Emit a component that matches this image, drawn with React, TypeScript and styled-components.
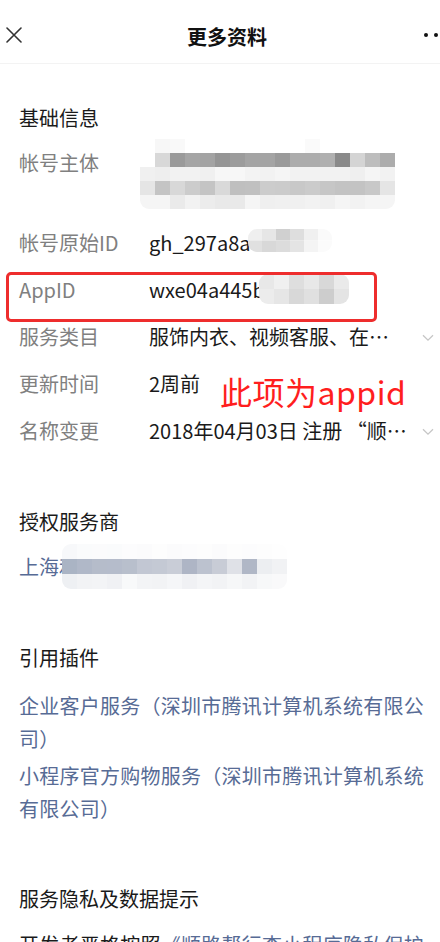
import React from 'react';
import styled, { createGlobalStyle } from 'styled-components';

const GlobalStyle = createGlobalStyle`
  html, body {
    margin: 0;
    padding: 0;
    background: #ffffff;
  }
  body {
    font-family: "Noto Sans CJK SC", "Noto Sans", sans-serif;
  }
`;

// mosaic colours of the blurred parts, row by row
const subjectCells = [
    ['#ffffff', '#f7f7f7', '#f9f9f9', '#ffffff', '#ffffff', '#ffffff', '#ffffff', '#ffffff', '#ffffff', '#ffffff', '#ffffff', '#fafafa', '#ffffff', '#ffffff', '#ffffff', '#ffffff', '#ffffff'],
    ['#ffffff', '#d8d8d8', '#9a9a9a', '#a5a5a5', '#a3a3a3', '#959595', '#9c9c9c', '#a4a4a4', '#a4a4a4', '#9a9a9a', '#acacac', '#acacac', '#b0b0b0', '#8a8a8a', '#d4d4d4', '#bdbdbd', '#acacac'],
    ['#f0f0f0', '#eeeeee', '#f2f2f2', '#f2f2f2', '#f0f0f0', '#f7f7f7', '#f7f7f7', '#f3f3f3', '#f2f2f2', '#f5f5f5', '#f2f2f2', '#f2f2f2', '#f2f2f2', '#f2f2f2', '#efefef', '#f5f5f5', '#f2f2f2'],
    ['#e5e5e5', '#c4c4c4', '#d8d8d8', '#cccccc', '#c4c4c4', '#d9d9d9', '#bfbfbf', '#c0c0c0', '#cccccc', '#cbcbcb', '#c8c8c8', '#cbcbcb', '#c6c6c6', '#c3c3c3', '#c3c3c3', '#c8c8c8', '#e5e5e5'],
    ['#f5f5f5', '#f5f5f5', '#eaeaea', '#f2f2f2', '#ececec', '#e9e9e9', '#e9e9e9', '#f5f5f5', '#efefef', '#f0f0f0', '#f0f0f0', '#f2f2f2', '#f0f0f0', '#f5f5f5', '#f2f2f2', '#f5f5f5', '#f5f5f5'],
];

const originCells = [
    ['#efefef', '#e6e6e6', '#d0d0d0', '#dedede', '#f0f0f0', '#fafafa'],
    ['#e0e0e0', '#d8d8d8', '#dcdcdc', '#e4e4e4', '#f4f4f4', '#fbfbfb'],
];

const appIdCells = [
    ['#e8e8e8', '#f0f0f0', '#dedede', '#e8e8e8', '#d8d8d8', '#eaeaea'],
    ['#ececec', '#e6e6e6', '#d8d8d8', '#e0e0e0', '#cdcdcd', '#e4e4e4'],
];

const providerCells = [
    ['#f7f8fa', '#fafbfc', '#fbfbfc', '#fafbfc', '#fcfcfd', '#fbfbfc', '#fdfdfd', '#fbfbfc', '#fcfcfd', '#fdfdfd', '#fbfbfc', '#fdfdfd', '#fcfcfd', '#fdfdfd', '#fefefe'],
    ['#aab4c4', '#b0b8c8', '#b5bcca', '#b5bccb', '#b8bfcc', '#c2c7d3', '#c4c9d4', '#c9cdd7', '#aeb5c5', '#bcc2cf', '#c8ccd6', '#dfe1e7', '#b0b7c6', '#eceef1', '#f1f2f4'],
    ['#eef0f3', '#f2f3f5', '#f3f4f6', '#f0f1f4', '#f8f9fa', '#f3f4f6', '#f2f3f5', '#f5f6f8', '#f0f1f4', '#f4f5f7', '#f2f3f5', '#f6f7f8', '#f2f3f5', '#f7f8f9', '#f9f9fa'],
];

interface MosaicProps {
    cells: string[][];
    cell?: number;
    rowHeight?: number;
    dx?: number;
    dy?: number;
    block?: boolean;
}

function Mosaic({ cells, cell = 15, rowHeight = 15, dx = 0, dy = 0, block = false }: MosaicProps) {
    const id = React.useId();
    const w = cells[0].length * cell;
    const h = cells.length * rowHeight;
    return (
        <MosaicSvg width={w} height={h} $dx={dx} $dy={dy} $block={block}>
            <defs>
                <clipPath id={id}>
                    <rect x="0" y="0" width={w} height={h} rx="9" />
                </clipPath>
            </defs>
            <g clipPath={`url(#${id})`}>
                {cells.map((row, r) =>
                    row.map((c, i) => (
                        <rect key={`${r}-${i}`} x={i * cell} y={r * rowHeight} width={cell} height={rowHeight} fill={c} />
                    ))
                )}
            </g>
        </MosaicSvg>
    );
}

const MosaicSvg = styled.svg<{ $dx: number; $dy: number; $block: boolean }>`
  display: ${(p) => (p.$block ? 'block' : 'inline-block')};
  vertical-align: top;
  margin-left: ${(p) => p.$dx}px;
  margin-top: ${(p) => p.$dy}px;
  margin-bottom: ${(p) => (p.$block ? 2 : p.$dy)}px;
`;

function CloseIcon() {
    return (
        <svg width="16" height="16" viewBox="0 0 16 16">
            <path d="M1 1 L15 15 M15 1 L1 15" stroke="#333" strokeWidth="1.6" strokeLinecap="round" fill="none" />
        </svg>
    );
}

function MoreIcon() {
    return (
        <svg width="16" height="6" viewBox="0 0 16 6">
            <circle cx="2" cy="3" r="2" fill="#111" />
            <circle cx="12" cy="3" r="2" fill="#111" />
            <circle cx="22" cy="3" r="2" fill="#111" />
        </svg>
    );
}

function ChevronIcon() {
    return (
        <svg width="12" height="8" viewBox="0 0 12 8">
            <path d="M1 1.2 L6 6.2 L11 1.2" stroke="#c6c6c6" strokeWidth="1.3" fill="none" />
        </svg>
    );
}

interface InfoRowProps {
    label: string;
    children: React.ReactNode;
    more?: boolean;
    clip?: boolean;
}

function InfoRow({ label, children, more = false, clip = false }: InfoRowProps) {
    return (
        <Row>
            <Label>{label}</Label>
            <Value $clip={clip}>{children}</Value>
            <ChevronSlot>{more && <ChevronIcon />}</ChevronSlot>
        </Row>
    );
}

export default function App() {
    return (
        <Page>
            <GlobalStyle />
            <Header>
                <HeaderSide $align="left">
                    <CloseIcon />
                </HeaderSide>
                <HeaderTitle>更多资料</HeaderTitle>
                <HeaderSide $align="right">
                    <MoreIcon />
                </HeaderSide>
            </Header>

            <Section>
                <SectionTitle>基础信息</SectionTitle>
                <InfoRow label="帐号主体">
                    <Mosaic cells={subjectCells} rowHeight={14} dx={-9} dy={-8} block />
                </InfoRow>
                <InfoRow label="帐号原始ID">
                    gh_297a8a
                    <Mosaic cells={originCells} cell={14} rowHeight={11.5} dx={-3} dy={2} />
                </InfoRow>
                <InfoRow label="AppID">
                    wxe04a445b
                    <Mosaic cells={appIdCells} dx={-6} />
                </InfoRow>
                <InfoRow label="服务类目" more clip>
                    服饰内衣、视频客服、在线教育、工具
                </InfoRow>
                <InfoRow label="更新时间">2周前</InfoRow>
                <InfoRow label="名称变更" more clip>
                    2018年04月03日 注册 “顺路帮行查”
                </InfoRow>
            </Section>

            <Section>
                <SectionTitle>授权服务商</SectionTitle>
                <LinkRow>
                    上海和
                    <Mosaic cells={providerCells} dx={-17} dy={-7} />
                </LinkRow>
            </Section>

            <Section>
                <SectionTitle>引用插件</SectionTitle>
                <PluginList>
                    <PluginLink>企业客户服务（深圳市腾讯计算机系统有限公司）</PluginLink>
                    <PluginLink>小程序官方购物服务（深圳市腾讯计算机系统有限公司）</PluginLink>
                </PluginList>
            </Section>

            <Section>
                <SectionTitle>服务隐私及数据提示</SectionTitle>
                <Notice>
                    开发者严格按照<NoticeLink>《顺路帮行查小程序隐私保护指引》</NoticeLink>处理你的个人信息，如你发现开发者不当处理你的个人信息，可进行投诉。
                </Notice>
            </Section>

            <MarkBox />
            <MarkText>此项为appid</MarkText>
        </Page>
    );
}

const Page = styled.div`
  position: relative;
  width: 440px;
  height: 942px;
  overflow: hidden;
  background: #ffffff;
  color: #1a1a1a;
`;

const Header = styled.header`
  display: flex;
  align-items: center;
  height: 54px;
  padding-top: 9px;
  border-bottom: 1px solid #f3f3f3;
`;

const HeaderSide = styled.div<{ $align: 'left' | 'right' }>`
  width: 60px;
  display: flex;
  align-items: center;
  justify-content: ${(p) => (p.$align === 'left' ? 'flex-start' : 'flex-end')};
  padding: ${(p) => (p.$align === 'left' ? '0 0 0 6px' : '0')};
  box-sizing: border-box;
  margin-top: -2px;
`;

const HeaderTitle = styled.h1`
  flex: 1;
  margin: 0;
  padding-left: 14px;
  text-align: center;
  font-size: 20px;
  font-weight: 600;
  color: #111111;
`;

const Section = styled.section`
  padding: 38px 6px 14px 19px;
`;

const SectionTitle = styled.h2`
  margin: 0 0 6px;
  font-size: 20px;
  font-weight: 400;
  line-height: 31px;
  color: #1a1a1a;
`;

const Row = styled.div`
  display: flex;
  align-items: flex-start;
  padding: 8px 0;
  font-size: 20px;
  line-height: 31px;
`;

const Label = styled.div`
  flex: 0 0 130px;
  color: #808080;
`;

const Value = styled.div<{ $clip: boolean }>`
  flex: 1;
  min-width: 0;
  color: #1a1a1a;
  white-space: nowrap;
  overflow: ${(p) => (p.$clip ? 'hidden' : 'visible')};
  text-overflow: ellipsis;
`;

const ChevronSlot = styled.div`
  flex: 0 0 26px;
  height: 31px;
  display: flex;
  align-items: center;
  justify-content: flex-end;
  padding-top: 3px;
  box-sizing: border-box;
`;

const LinkRow = styled.div`
  padding: 8px 0;
  font-size: 20px;
  line-height: 31px;
  color: #576b95;
  white-space: nowrap;
`;

const PluginList = styled.div`
  display: flex;
  flex-direction: column;
  gap: 4px;
  padding: 10px 8px 6px 0;
`;

const PluginLink = styled.div`
  font-size: 20px;
  line-height: 33px;
  letter-spacing: 0.25px;
  color: #576b95;
`;

const Notice = styled.p`
  margin: 0;
  padding: 8px 8px 0 0;
  font-size: 20px;
  line-height: 33px;
  letter-spacing: 0.25px;
  color: #1a1a1a;
`;

const NoticeLink = styled.span`
  color: #576b95;
`;

const MarkBox = styled.div`
  position: absolute;
  top: 272px;
  left: 6px;
  width: 371px;
  height: 50px;
  box-sizing: border-box;
  border: 3px solid #ee2d2d;
  border-radius: 5px;
  pointer-events: none;
`;

const MarkText = styled.div`
  position: absolute;
  top: 371px;
  left: 220px;
  font-size: 32px;
  line-height: 40px;
  letter-spacing: 0.5px;
  color: #ff1e1e;
`;
